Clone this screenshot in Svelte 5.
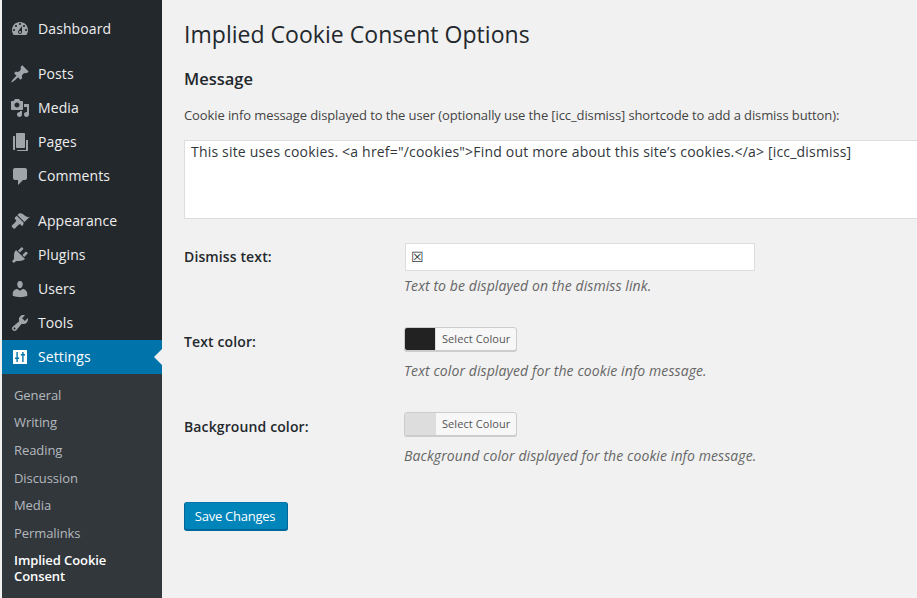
<script>
  const icons = {
    dashboard: "M3.76 16h12.48c1.1-1.37 1.76-3.11 1.76-5 0-4.42-3.58-8-8-8s-8 3.58-8 8c0 1.89.66 3.63 1.76 5zM10 4c.55 0 1 .45 1 1s-.45 1-1 1-1-.45-1-1 .45-1 1-1zM6 6c.55 0 1 .45 1 1s-.45 1-1 1-1-.45-1-1 .45-1 1-1zm8 0c.55 0 1 .45 1 1s-.45 1-1 1-1-.45-1-1 .45-1 1-1zm-5.37 5.55L12 7v6c0 1.1-.9 2-2 2s-2-.9-2-2c0-.57.24-1.08.63-1.45zM4 10c.55 0 1 .45 1 1s-.45 1-1 1-1-.45-1-1 .45-1 1-1zm12 0c.55 0 1 .45 1 1s-.45 1-1 1-1-.45-1-1 .45-1 1-1zm-5 3c0-.55-.45-1-1-1s-1 .45-1 1 .45 1 1 1 1-.45 1-1z",
    posts: "M10.44 3.02l1.82-1.82 6.36 6.35-1.83 1.82c-1.05-.68-2.48-.57-3.41.36l-.75.75c-.92.93-1.04 2.35-.35 3.41l-1.83 1.82-2.41-2.41-2.8 2.79c-.42.42-3.38 2.71-3.8 2.29s1.86-3.39 2.28-3.81l2.79-2.79L4.1 9.36l1.83-1.82c1.05.69 2.48.57 3.4-.36l.75-.75c.93-.92 1.05-2.35.36-3.41z",
    media: "M13 11V4c0-.55-.45-1-1-1h-1.67L9 1H5L3.67 3H2c-.55 0-1 .45-1 1v7c0 .55.45 1 1 1h10c.55 0 1-.45 1-1zM7 4.5c1.38 0 2.5 1.12 2.5 2.5S8.38 9.5 7 9.5 4.5 8.38 4.5 7 5.62 4.5 7 4.5zM14 6h5v10.5c0 1.38-1.12 2.5-2.5 2.5S14 17.88 14 16.5s1.12-2.5 2.5-2.5c.17 0 .34.02.5.05V9h-3V6zm-4 8.05V13h2v3.5c0 1.38-1.12 2.5-2.5 2.5S7 17.88 7 16.5 8.12 14 9.5 14c.17 0 .34.02.5.05z",
    pages: "M16 8v10H7c0 .55.45 1 1 1h9c.55 0 1-.45 1-1V8zM6 2v13c0 .55.45 1 1 1h7c.55 0 1-.45 1-1V2c0-.55-.45-1-1-1H7c-.55 0-1 .45-1 1zM3 5v12c0 .55.45 1 1 1h1V4H4c-.55 0-1 .45-1 1z",
    comments: "M5 2h10c1.1 0 2 .9 2 2v8c0 1.1-.9 2-2 2h-2l-5 5v-5H5c-1.1 0-2-.9-2-2V4c0-1.1.9-2 2-2z",
    appearance: "M14.48 11.06L7.41 3.99l1.5-1.5c.5-.56 2.3-.47 3.51.32 1.21.8 1.43 1.28 2.91 2.1 1.18.64 2.45 1.26 4.45.85zm-.71.71L6.7 4.7 4.93 6.47c-.39.39-.39 1.02 0 1.41l1.06 1.06c.39.39.39 1.03 0 1.42-.6.6-1.4 1.63-2.12 2.34-.8.8-2.26 1.5-2.26 2.3 0 .8 2 2.8 2.8 2.8.8 0 1.5-1.46 2.3-2.26.7-.72 1.74-1.52 2.34-2.12.39-.39 1.03-.39 1.42 0l1.06 1.06c.39.39 1.02.39 1.41 0z",
    plugins: "M13.11 4.36L9.87 7.6 8 5.73l3.24-3.24c.35-.34 1.05-.2 1.56.32.52.51.66 1.21.31 1.55zm-8 1.77l.91-1.12 9.01 9.01-1.19.84c-.71.71-2.63 1.16-3.82 1.16H6.14L4.9 17.26c-.59.59-1.54.59-2.12 0a1.49 1.49 0 0 1 0-2.12l1.24-1.24v-3.88c0-1.13.4-3.19 1.09-3.89zm7.26 3.97l3.24-3.24c.34-.35 1.04-.21 1.55.31.52.51.66 1.21.31 1.55l-3.24 3.25z",
    users: "M10 9.25c-2.27 0-2.73-3.44-2.73-3.44C7 4.02 7.82 2 9.97 2c2.16 0 2.98 2.02 2.71 3.81 0 0-.41 3.44-2.68 3.44zm0 2.57L12.72 10c2.39 0 4.52 2.33 4.52 4.53v2.49s-3.65 1.13-7.24 1.13c-3.65 0-7.24-1.13-7.24-1.13v-2.49c0-2.25 1.94-4.48 4.47-4.48z",
    tools: "M16.68 9.77c-1.34 1.34-3.3 1.67-4.95.99l-5.41 6.52c-.99.99-2.59.99-3.58 0s-.99-2.59 0-3.57l6.52-5.42c-.68-1.65-.35-3.61.99-4.95 1.28-1.28 3.12-1.62 4.72-1.06l-2.89 2.89 2.82 2.82 2.86-2.87c.53 1.58.18 3.39-1.08 4.65zM3.81 16.21c.4.39 1.04.39 1.43 0 .4-.4.4-1.04 0-1.43-.39-.4-1.03-.4-1.43 0-.39.39-.39 1.03 0 1.43z",
    settings: "M3 3h14v14H3zM6.4 5v5.6H5v1.4h1.4v3h1.4v-3h1.4v-1.4H7.8V5zM12.2 5v2H10.8v1.4h1.4V15h1.4V8.4h1.4V7h-1.4V5z"
  };

  const groups = [
    [{ name: "Dashboard", icon: "dashboard" }],
    [
      { name: "Posts", icon: "posts" },
      { name: "Media", icon: "media" },
      { name: "Pages", icon: "pages" },
      { name: "Comments", icon: "comments" }
    ],
    [
      { name: "Appearance", icon: "appearance" },
      { name: "Plugins", icon: "plugins" },
      { name: "Users", icon: "users" },
      { name: "Tools", icon: "tools" },
      { name: "Settings", icon: "settings", current: true }
    ]
  ];

  const submenu = ["General", "Writing", "Reading", "Discussion", "Media", "Permalinks"];
</script>

<div class="page">
  <nav class="sidebar">
    {#each groups as group}
      <ul class="group">
        {#each group as item}
          <li class="item" class:current={item.current}>
            <svg class="icon" viewBox="0 0 20 20"><path fill-rule="evenodd" d={icons[item.icon]} /></svg>
            <span>{item.name}</span>
          </li>
        {/each}
      </ul>
    {/each}
    <ul class="submenu">
      {#each submenu as name}
        <li>{name}</li>
      {/each}
      <li class="active">Implied Cookie Consent</li>
    </ul>
  </nav>

  <main class="content">
    <h1>Implied Cookie Consent Options</h1>
    <h2>Message</h2>
    <p class="intro">Cookie info message displayed to the user (optionally use the [icc_dismiss] shortcode to add a dismiss button):</p>
    <div class="message">This site uses cookies. &lt;a href="/cookies"&gt;Find out more about this site’s cookies.&lt;/a&gt; [icc_dismiss]</div>

    <div class="row first">
      <div class="label">Dismiss text:</div>
      <div class="field">
        <div class="text-input">☒</div>
        <p class="hint">Text to be displayed on the dismiss link.</p>
      </div>
    </div>

    <div class="row">
      <div class="label">Text color:</div>
      <div class="field">
        <div class="colour">
          <span class="swatch dark"></span>
          <span class="colour-text">Select Colour</span>
        </div>
        <p class="hint">Text color displayed for the cookie info message.</p>
      </div>
    </div>

    <div class="row">
      <div class="label">Background color:</div>
      <div class="field">
        <div class="colour">
          <span class="swatch light"></span>
          <span class="colour-text">Select Colour</span>
        </div>
        <p class="hint">Background color displayed for the cookie info message.</p>
      </div>
    </div>

    <button class="save">Save Changes</button>
  </main>
</div>

<style>
  :global(body) {
    margin: 0;
    background: #f1f1f1;
  }

  .page {
    display: flex;
    width: 917px;
    height: 598px;
    overflow: hidden;
    padding-left: 2px;
    box-sizing: border-box;
    font-family: "Open Sans", sans-serif;
    color: #444;
    background: #f1f1f1;
  }

  ul {
    list-style: none;
    margin: 0;
    padding: 0;
  }

  .sidebar {
    width: 160px;
    flex: none;
    background: #23282d;
    padding-top: 12px;
    box-sizing: border-box;
  }

  .group {
    margin-bottom: 11px;
  }

  .group:nth-child(3) {
    margin-bottom: 0;
  }

  .item {
    position: relative;
    display: flex;
    align-items: center;
    height: 34px;
    padding-left: 8px;
    font-size: 14px;
    letter-spacing: 0.1px;
    color: #eee;
  }

  .item span {
    margin-bottom: 2px;
  }

  .item .icon {
    width: 20px;
    height: 20px;
    margin-right: 8px;
    fill: #a0a5aa;
  }

  .item.current {
    background: #0073aa;
    color: #fff;
  }

  .item.current .icon {
    fill: #fff;
  }

  .item.current::after {
    content: "";
    position: absolute;
    right: 0;
    top: 9px;
    border: 8px solid transparent;
    border-left: 0;
    border-right-color: #f1f1f1;
  }

  .submenu {
    background: #32373c;
    padding: 7.5px 30px 0 12px;
    height: 224px;
    font-size: 13px;
    letter-spacing: -0.08px;
    color: #b4b9be;
  }

  .submenu li {
    height: 27.7px;
    line-height: 27.7px;
  }

  .submenu li.active {
    height: auto;
    line-height: 16px;
    padding-top: 4px;
    color: #fff;
    font-weight: 600;
  }

  .content {
    flex: 1;
    min-width: 0;
    padding-left: 22px;
  }

  h1 {
    margin: 0;
    padding-top: 18px;
    font-size: 23px;
    font-weight: 400;
    line-height: 32px;
    letter-spacing: 0.03px;
    color: #23282d;
  }

  h2 {
    margin: 0;
    padding-top: 17px;
    font-size: 16.5px;
    font-weight: 600;
    line-height: 24px;
    color: #23282d;
  }

  .intro {
    margin: 0;
    padding-top: 15px;
    font-size: 13px;
    line-height: 18px;
    letter-spacing: -0.1px;
  }

  .message {
    width: 760px;
    height: 79px;
    margin-top: 16px;
    padding: 2px 6px;
    box-sizing: border-box;
    background: #fff;
    border: 1px solid #ddd;
    font-size: 14px;
    line-height: 18px;
    letter-spacing: 0.19px;
    color: #32373c;
    white-space: nowrap;
  }

  .row {
    display: flex;
    margin-top: 31px;
  }

  .row.first {
    margin-top: 24px;
  }

  .label {
    width: 220px;
    flex: none;
    padding-top: 5px;
    font-size: 14px;
    font-weight: 600;
    line-height: 20px;
    letter-spacing: 0.12px;
    color: #23282d;
  }

  .first .label {
    padding-top: 4px;
  }

  .text-input {
    width: 350px;
    height: 28px;
    margin-left: 1px;
    padding-left: 5px;
    box-sizing: border-box;
    background: #fff;
    border: 1px solid #ddd;
    font-size: 14px;
    line-height: 26px;
    color: #32373c;
  }

  .hint {
    margin: 9px 0 0;
    font-size: 14px;
    font-style: italic;
    line-height: 21px;
    letter-spacing: 0.09px;
    color: #666;
  }

  .first .hint {
    margin-top: 4px;
  }

  .colour {
    display: flex;
    width: 113px;
    height: 24px;
    box-sizing: border-box;
    border: 1px solid #ccc;
    border-radius: 3px;
    box-shadow: 0 1px 0 #ccc;
    overflow: hidden;
    background: #f7f7f7;
  }

  .swatch {
    width: 30px;
    flex: none;
    border-right: 1px solid #ddd;
  }

  .swatch.dark {
    background: #222;
  }

  .swatch.light {
    background: #ddd;
  }

  .colour-text {
    padding-left: 6px;
    font-size: 11px;
    line-height: 22px;
    letter-spacing: 0.08px;
    color: #555;
  }

  .save {
    display: block;
    width: 104px;
    height: 28px;
    margin-top: 36px;
    padding: 0 2px 0 0;
    background: #0085ba;
    border: 1px solid #006799;
    border-color: #0073aa #006799 #006799;
    border-radius: 3px;
    box-shadow: 0 1px 0 #006799;
    font-family: inherit;
    font-size: 13px;
    letter-spacing: -0.25px;
    color: #fff;
  }
</style>
